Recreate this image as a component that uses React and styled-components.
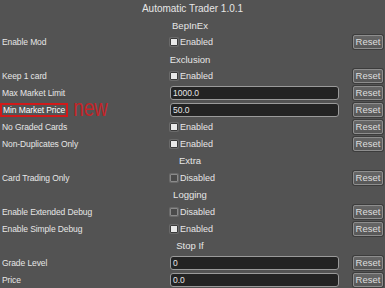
import styled, { createGlobalStyle } from "styled-components";

const Global = createGlobalStyle`
  body {
    margin: 0;
    background: #535353;
    font-family: "Liberation Sans", Arial, sans-serif;
    color: #e6e6e6;
    overflow: hidden;
  }
`;

const Panel = styled.div`
  width: 385px;
  height: 288px;
  display: flex;
  flex-direction: column;
`;

const Title = styled.div`
  height: 17px;
  line-height: 17px;
  text-align: center;
  font-size: 10px;
`;

const Section = styled.div`
  height: 17px;
  line-height: 17px;
  text-align: center;
  font-size: 9.5px;
  padding-right: 5px;
`;

const Row = styled.div`
  height: 17px;
  display: grid;
  grid-template-columns: 170px 1fr 38px;
  align-items: center;
`;

const Label = styled.div`
  padding-left: 2px;
  font-size: 8.5px;
  letter-spacing: -0.1px;
  display: flex;
  align-items: center;
  gap: 5px;
`;

const Marked = styled.span`
  border: 2px solid #d01a1a;
  padding: 1px 1px 0;
  margin-left: -2px;
  line-height: 9px;
  color: #fff;
`;

const NewTag = styled.span`
  display: inline-block;
  color: #c42428;
  font-size: 19px;
  line-height: 14px;
  transform: scaleY(1.22);
  margin-top: -2px;
`;

const Toggle = styled.div`
  display: flex;
  align-items: center;
  font-size: 9px;
  gap: 2px;
`;

const Box = styled.span`
  width: 6px;
  height: 6px;
  border-radius: 1px;
  background: ${({ on }) => (on ? "#e8e8e8" : "#4a4a4a")};
  border: 1px solid ${({ on }) => (on ? "#3a3a3a" : "#8a8a8a")};
  box-shadow: 0 0 0 1px #6a6a6a;
`;

const Input = styled.div`
  height: 12px;
  margin-right: 8px;
  background: #232323;
  border: 1px solid #9a9a9a;
  border-radius: 3px;
  font-size: 8.5px;
  line-height: 12px;
  padding-left: 2px;
  color: #e6e6e6;
`;

const Reset = styled.div`
  justify-self: end;
  margin-right: 2px;
  width: 28px;
  height: 12px;
  border: 1px solid #8e8e8e;
  border-radius: 2px;
  background: linear-gradient(#666, #575757);
  box-shadow: 0 0 0 1px #3c3c3c;
  font-size: 9.5px;
  line-height: 12px;
  text-align: center;
  color: #dedede;
`;

const rows = [
  { section: "BepInEx" },
  { label: "Enable Mod", toggle: true },
  { section: "Exclusion" },
  { label: "Keep 1 card", toggle: true },
  { label: "Max Market Limit", value: "1000.0" },
  { label: "Min Market Price", value: "50.0", isNew: true },
  { label: "No Graded Cards", toggle: true },
  { label: "Non-Duplicates Only", toggle: true },
  { section: "Extra" },
  { label: "Card Trading Only", toggle: false },
  { section: "Logging" },
  { label: "Enable Extended Debug", toggle: false },
  { label: "Enable Simple Debug", toggle: true },
  { section: "Stop If" },
  { label: "Grade Level", value: "0" },
  { label: "Price", value: "0.0" },
];

export default function App() {
  return (
    <Panel>
      <Global />
      <Title>Automatic Trader 1.0.1</Title>
      {rows.map((r, i) =>
        r.section ? (
          <Section key={i}>{r.section}</Section>
        ) : (
          <Row key={i}>
            <Label>
              {r.isNew ? (
                <>
                  <Marked>{r.label}</Marked>
                  <NewTag>new</NewTag>
                </>
              ) : (
                r.label
              )}
            </Label>
            {r.value !== undefined ? (
              <Input>{r.value}</Input>
            ) : (
              <Toggle>
                <Box on={r.toggle} />
                {r.toggle ? "Enabled" : "Disabled"}
              </Toggle>
            )}
            <Reset>Reset</Reset>
          </Row>
        )
      )}
    </Panel>
  );
}
